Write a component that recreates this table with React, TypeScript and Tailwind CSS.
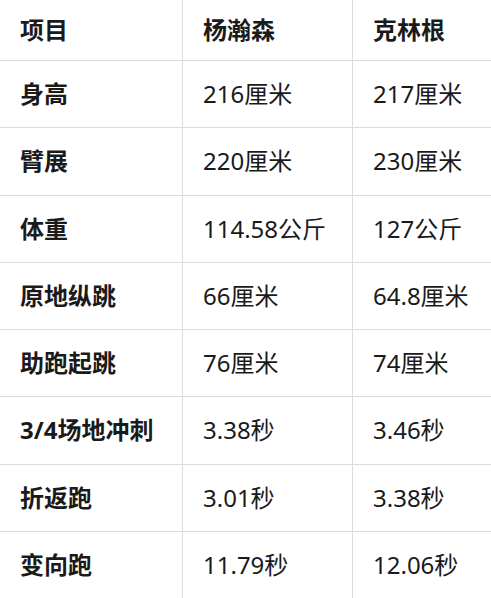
import React from "react";

const rows: [string, string, string][] = [
  ["身高", "216厘米", "217厘米"],
  ["臂展", "220厘米", "230厘米"],
  ["体重", "114.58公斤", "127公斤"],
  ["原地纵跳", "66厘米", "64.8厘米"],
  ["助跑起跳", "76厘米", "74厘米"],
  ["3/4场地冲刺", "3.38秒", "3.46秒"],
  ["折返跑", "3.01秒", "3.38秒"],
  ["变向跑", "11.79秒", "12.06秒"],
];

export default function App() {
  return (
    <div
      className="w-[491px] h-[598px] bg-white text-[#1a1a1a] text-[24px] overflow-hidden"
      style={{ fontFamily: '"Noto Sans", "Noto Sans CJK SC", sans-serif' }}
    >
      <div className="grid grid-cols-[182px_170px_139px] grid-rows-[60px_repeat(8,67.25px)]">
        <div className="flex items-center pl-5 font-bold">项目</div>
        <div className="flex items-center pl-5 font-bold border-l border-[#dcdcdc]">杨瀚森</div>
        <div className="flex items-center pl-5 font-bold border-l border-[#dcdcdc]">克林根</div>
        {rows.map(([a, b, c]) => (
          <React.Fragment key={a}>
            <div className="flex items-center pl-5 font-bold border-t border-[#dcdcdc]">{a}</div>
            <div className="flex items-center pl-5 border-t border-l border-[#dcdcdc]">{b}</div>
            <div className="flex items-center pl-5 border-t border-l border-[#dcdcdc]">{c}</div>
          </React.Fragment>
        ))}
      </div>
    </div>
  );
}
